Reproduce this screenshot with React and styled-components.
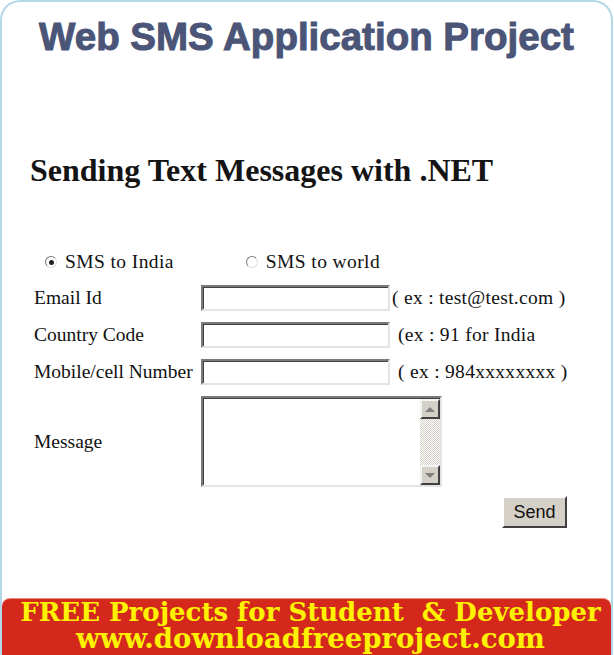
import React from "react";
import styled, { createGlobalStyle } from "styled-components";

const Global = createGlobalStyle`
  html, body {
    margin: 0;
    padding: 0;
    background: #ffffff;
  }
  body {
    font-family: "Liberation Serif", "Times New Roman", serif;
    color: #111;
  }
`;

const Frame = styled.div`
  width: 613px;
  height: 655px;
  box-sizing: border-box;
  border: 2px solid #b2d9e5;
  border-bottom: none;
  border-radius: 20px 20px 0 0;
  display: flex;
  flex-direction: column;
  overflow: hidden;
`;

const Title = styled.h1`
  margin: 0;
  padding-top: 15px;
  font-family: "Liberation Sans", Arial, sans-serif;
  font-weight: bold;
  font-size: 38.5px;
  line-height: 40px;
  color: #4a5577;
  -webkit-text-stroke: 1px #4a5577;
  text-align: center;
`;

const Heading = styled.h2`
  margin: 98px 0 0 28px;
  font-family: "Liberation Serif", "Times New Roman", serif;
  font-weight: bold;
  font-size: 32px;
  line-height: 31px;
  color: #141414;
`;

const Form = styled.div`
  margin: 65px 0 0 32px;
  display: grid;
  grid-template-columns: 167px 1fr;
  row-gap: 11px;
  align-items: center;
  font-size: 19.5px;
`;

const RadioRow = styled.div`
  grid-column: 1 / 3;
  display: flex;
  align-items: center;
  gap: 72px;
  padding-left: 11px;
  height: 22px;
  margin-bottom: 1px;
  letter-spacing: 0.4px;
`;

const RadioLabel = styled.label`
  display: flex;
  align-items: center;
  gap: 8px;
`;

const RadioDot = styled.span`
  width: 12px;
  height: 12px;
  border-radius: 50%;
  box-sizing: border-box;
  border: 1.5px solid;
  border-color: #7a7a7a #e0e0e0 #e0e0e0 #7a7a7a;
  background: #fff;
  display: flex;
  align-items: center;
  justify-content: center;
  &::after {
    content: "";
    width: 5px;
    height: 5px;
    border-radius: 50%;
    background: ${(p) => (p.checked ? "#222" : "transparent")};
  }
`;

const Label = styled.div`
  white-space: nowrap;
`;

const Field = styled.div`
  display: flex;
  align-items: center;
`;

const Input = styled.div`
  width: 189px;
  height: 26px;
  box-sizing: border-box;
  border: 2px solid;
  border-color: #7a7a7a #e4e4e4 #e4e4e4 #7a7a7a;
  box-shadow: inset 1px 1px 0 #404040;
  background: #fff;
`;

const Hint = styled.span`
  margin-left: ${(p) => p.gap}px;
  white-space: nowrap;
  letter-spacing: 0.3px;
`;

const TextArea = styled.div`
  width: 241px;
  height: 91px;
  box-sizing: border-box;
  border: 2px solid;
  border-color: #7a7a7a #e4e4e4 #e4e4e4 #7a7a7a;
  box-shadow: inset 1px 1px 0 #404040;
  background: #fff;
  display: flex;
  justify-content: flex-end;
`;

const ScrollBar = styled.div`
  width: 20px;
  display: flex;
  flex-direction: column;
  padding-top: 1px;
`;

const ScrollButton = styled.div`
  height: 20px;
  box-sizing: border-box;
  background: #d4d0c8;
  border: 2px solid;
  border-color: #f4f4f4 #404040 #404040 #f4f4f4;
  display: flex;
  align-items: center;
  justify-content: center;
  &::after {
    content: "";
    width: 0;
    height: 0;
    border-left: 5px solid transparent;
    border-right: 5px solid transparent;
    ${(p) =>
      p.down
        ? "border-top: 5px solid #808080;"
        : "border-bottom: 5px solid #808080;"}
  }
`;

const Track = styled.div`
  flex: 1;
  background-color: #ffffff;
  background-image: repeating-conic-gradient(#d4d0c8 0 25%, #ffffff 0 50%);
  background-size: 2px 2px;
`;

const SendButton = styled.button`
  grid-column: 2;
  justify-self: start;
  margin-left: 301px;
  margin-top: -2px;
  width: 65px;
  height: 32px;
  box-sizing: border-box;
  background: #d4d0c8;
  border: 2px solid;
  border-color: #ffffff #404040 #404040 #ffffff;
  font-family: "Liberation Sans", Arial, sans-serif;
  font-size: 18px;
  color: #111;
  padding: 0;
`;

const Banner = styled.div`
  margin-top: auto;
  height: 57px;
  box-sizing: border-box;
  background: #d4281d;
  border-top: 1px solid #e88a80;
  border-radius: 8px 8px 0 0;
  padding: 1px 0 0 8px;
  text-align: center;
  font-family: "DejaVu Serif", Georgia, serif;
  font-weight: bold;
  color: #fff200;
`;

const BannerLine = styled.div`
  font-size: ${(p) => p.size}px;
  line-height: ${(p) => p.lh}px;
  white-space: pre;
`;

const rows = [
  { label: "Email Id", hint: "( ex : test@test.com )", gap: 2 },
  { label: "Country Code", hint: "(ex : 91 for India", gap: 8 },
  { label: "Mobile/cell Number", hint: "( ex : 984xxxxxxxx )", gap: 8 },
];

export default function App() {
  return (
    <>
      <Global />
      <Frame>
        <Title>Web SMS Application Project</Title>
        <Heading>Sending Text Messages with .NET</Heading>
        <Form>
          <RadioRow>
            <RadioLabel>
              <RadioDot checked />
              SMS to India
            </RadioLabel>
            <RadioLabel>
              <RadioDot />
              SMS to world
            </RadioLabel>
          </RadioRow>
          {rows.map((r) => (
            <React.Fragment key={r.label}>
              <Label>{r.label}</Label>
              <Field>
                <Input />
                <Hint gap={r.gap}>{r.hint}</Hint>
              </Field>
            </React.Fragment>
          ))}
          <Label>Message</Label>
          <Field>
            <TextArea>
              <ScrollBar>
                <ScrollButton />
                <Track />
                <ScrollButton down />
              </ScrollBar>
            </TextArea>
          </Field>
          <SendButton>Send</SendButton>
        </Form>
        <Banner>
          <BannerLine size={26} lh={24}>
            FREE Projects for Student  &amp; Developer
          </BannerLine>
          <BannerLine size={27.5} lh={28}>
            www.downloadfreeproject.com
          </BannerLine>
        </Banner>
      </Frame>
    </>
  );
}
